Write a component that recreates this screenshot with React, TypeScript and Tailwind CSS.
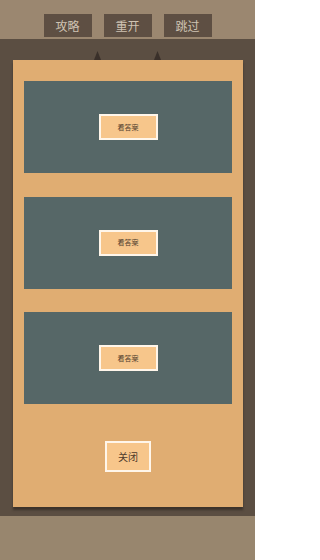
import React from 'react'

const font = { fontFamily: '"Noto Sans CJK SC", "Noto Sans", sans-serif' }

const TopButton: React.FC<{ label: string }> = ({ label }) => (
  <button className="w-12 h-[23px] bg-[#5e4f43] text-[#cfc3b3] text-[12px] leading-none flex items-center justify-center">
    {label}
  </button>
)

const AnswerCard: React.FC = () => (
  <div className="h-[92px] bg-[#566767] flex justify-center pt-[33px]">
    <button className="w-[59px] h-[26px] bg-[#f7c68b] border-2 border-[#fff6ea] text-[#4e3b2b] text-[7px] leading-none flex items-center justify-center">
      看答案
    </button>
  </div>
)

const Pin: React.FC = () => (
  <svg width="7" height="9" viewBox="0 0 7 9">
    <path d="M3.5 0 L7 9 L0 9 Z" fill="#3a302a" />
  </svg>
)

export default function App() {
  return (
    <div className="w-[255px] h-[560px] flex flex-col bg-[#5b4e42]" style={font}>
      {/* top toolbar */}
      <div className="h-[39px] bg-[#9b8770] flex justify-center gap-3 pt-[14px]">
        <TopButton label="攻略" />
        <TopButton label="重开" />
        <TopButton label="跳过" />
      </div>

      {/* middle area with modal */}
      <div className="flex-1 flex flex-col px-[13px] pr-[12px]">
        <div className="h-[21px] flex items-end gap-[53px] pl-[81px]">
          <Pin />
          <Pin />
        </div>
        <div className="h-[447px] bg-[#e0ad72] shadow-[0_3px_2px_rgba(40,32,26,0.6)] px-[11px] pt-[21px] flex flex-col">
          <div className="flex flex-col gap-[23.5px]">
            <AnswerCard />
            <AnswerCard />
            <AnswerCard />
          </div>
          <div className="flex justify-center mt-[37px]">
            <button className="w-[46px] h-[31px] bg-[#f7c68b] border-2 border-[#fff6ea] text-[#4e3b2b] text-[10px] leading-none flex items-center justify-center">
              关闭
            </button>
          </div>
        </div>
      </div>

      {/* bottom strip */}
      <div className="h-[44px] bg-[#98866e]" />
    </div>
  )
}
